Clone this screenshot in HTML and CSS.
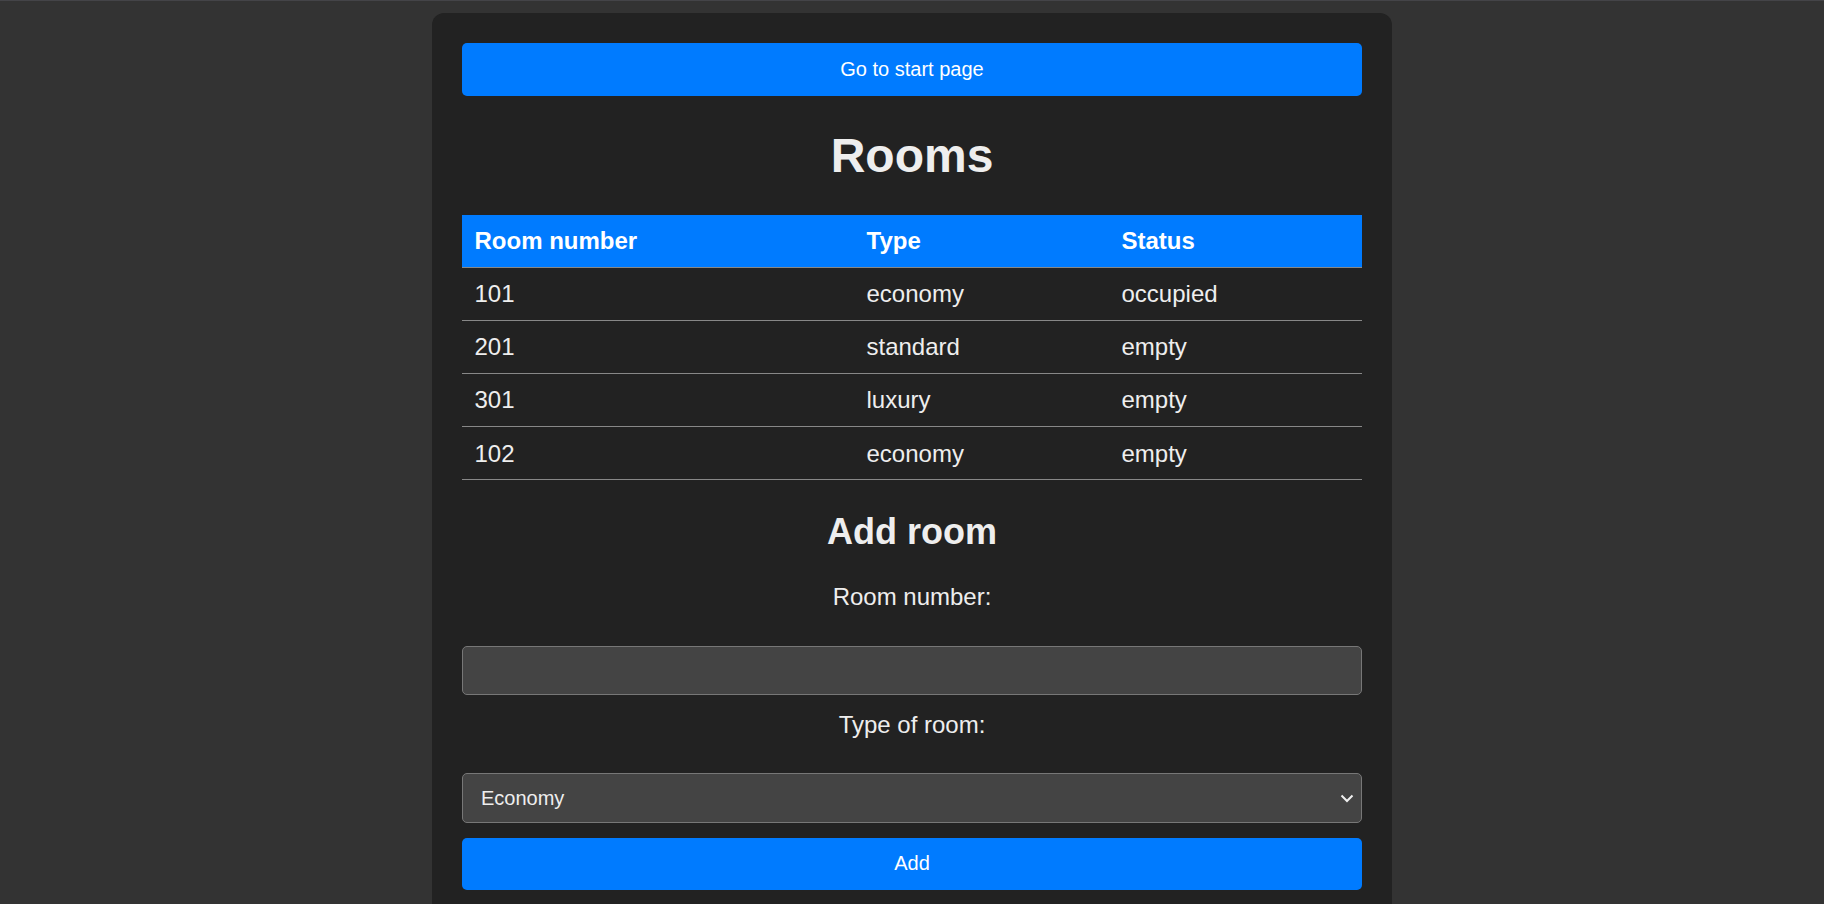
FILE: index.html
```html
<!DOCTYPE html>
<html lang="en">
<head>
<meta charset="utf-8">
<title>Rooms</title>
<link rel="stylesheet" href="styles.css">
</head>
<body>
<div class="topline"></div>
<main class="card">
  <button class="btn" type="button">Go to start page</button>
  <h1 class="title">Rooms</h1>
  <table class="rooms">
    <colgroup>
      <col class="c1"><col class="c2"><col class="c3">
    </colgroup>
    <thead>
      <tr><th>Room number</th><th>Type</th><th>Status</th></tr>
    </thead>
    <tbody>
      <tr><td>101</td><td>economy</td><td>occupied</td></tr>
      <tr><td>201</td><td>standard</td><td>empty</td></tr>
      <tr><td>301</td><td>luxury</td><td>empty</td></tr>
      <tr><td>102</td><td>economy</td><td>empty</td></tr>
    </tbody>
  </table>
  <h2 class="subtitle">Add room</h2>
  <form class="form">
    <label class="label label-first" for="num">Room number:</label>
    <input class="field" id="num" type="text">
    <label class="label label-second" for="type">Type of room:</label>
    <div class="select-wrap">
      <select class="field select" id="type">
        <option>Economy</option>
        <option>Standard</option>
        <option>Luxury</option>
      </select>
      <svg class="chevron" width="14" height="9" viewBox="0 0 14 9"><path d="M1.5 1.5 L7 7 L12.5 1.5" fill="none" stroke="#f0f0f0" stroke-width="2"/></svg>
    </div>
    <button class="btn" type="button">Add</button>
  </form>
</main>
</body>
</html>
```
FILE: styles.css
```css
html, body {
  margin: 0;
  padding: 0;
}
body {
  background: #333333;
  font-family: "Liberation Sans", Arial, sans-serif;
  color: #eeeeee;
  height: 904px;
  overflow: hidden;
}
.topline {
  height: 1px;
  background: #444448;
}
.card {
  width: 900px;
  margin: 12px auto 0;
  background: #222222;
  border-radius: 12px;
  padding: 30px 30px 40px;
}
.btn {
  display: block;
  width: 100%;
  height: 52.5px;
  border: none;
  border-radius: 5px;
  background: #007bff;
  color: #ffffff;
  font-family: "Liberation Sans", Arial, sans-serif;
  font-size: 20px;
  cursor: pointer;
}
.title {
  font-size: 48px;
  font-weight: bold;
  text-align: center;
  margin: 32px 0;
  color: #eeeeee;
}
.rooms {
  width: 100%;
  border-collapse: collapse;
  table-layout: fixed;
  font-size: 24px;
}
.c1 { width: 392px; }
.c2 { width: 255px; }
.c3 { width: 253px; }
.rooms th,
.rooms td {
  text-align: left;
  padding: 12.3px 12.5px;
  border-bottom: 1px solid #888888;
  line-height: 27.6px;
}
.rooms th {
  background: #007bff;
  color: #ffffff;
  font-weight: bold;
}
.rooms td {
  color: #eeeeee;
}
.subtitle {
  font-size: 36px;
  font-weight: bold;
  text-align: center;
  margin: 31px 0 30px;
  color: #eeeeee;
}
.form {
  display: flex;
  flex-direction: column;
}
.label {
  display: block;
  text-align: center;
  font-size: 24px;
  line-height: 27.6px;
}
.label-first {
  margin-bottom: 35px;
}
.label-second {
  margin-bottom: 34px;
}
.field {
  box-sizing: border-box;
  width: 100%;
  height: 49px;
  background: #444444;
  border: 1px solid #777777;
  border-radius: 5px;
  color: #eeeeee;
  font-family: "Liberation Sans", Arial, sans-serif;
  font-size: 20px;
  padding: 0 18px;
  margin: 0 0 16px;
  outline: none;
}
.select-wrap {
  position: relative;
  margin-bottom: 15px;
}
.select {
  -webkit-appearance: none;
  appearance: none;
  height: 50px;
  margin: 0;
}
.chevron {
  position: absolute;
  right: 8px;
  top: 21px;
  pointer-events: none;
}
```
